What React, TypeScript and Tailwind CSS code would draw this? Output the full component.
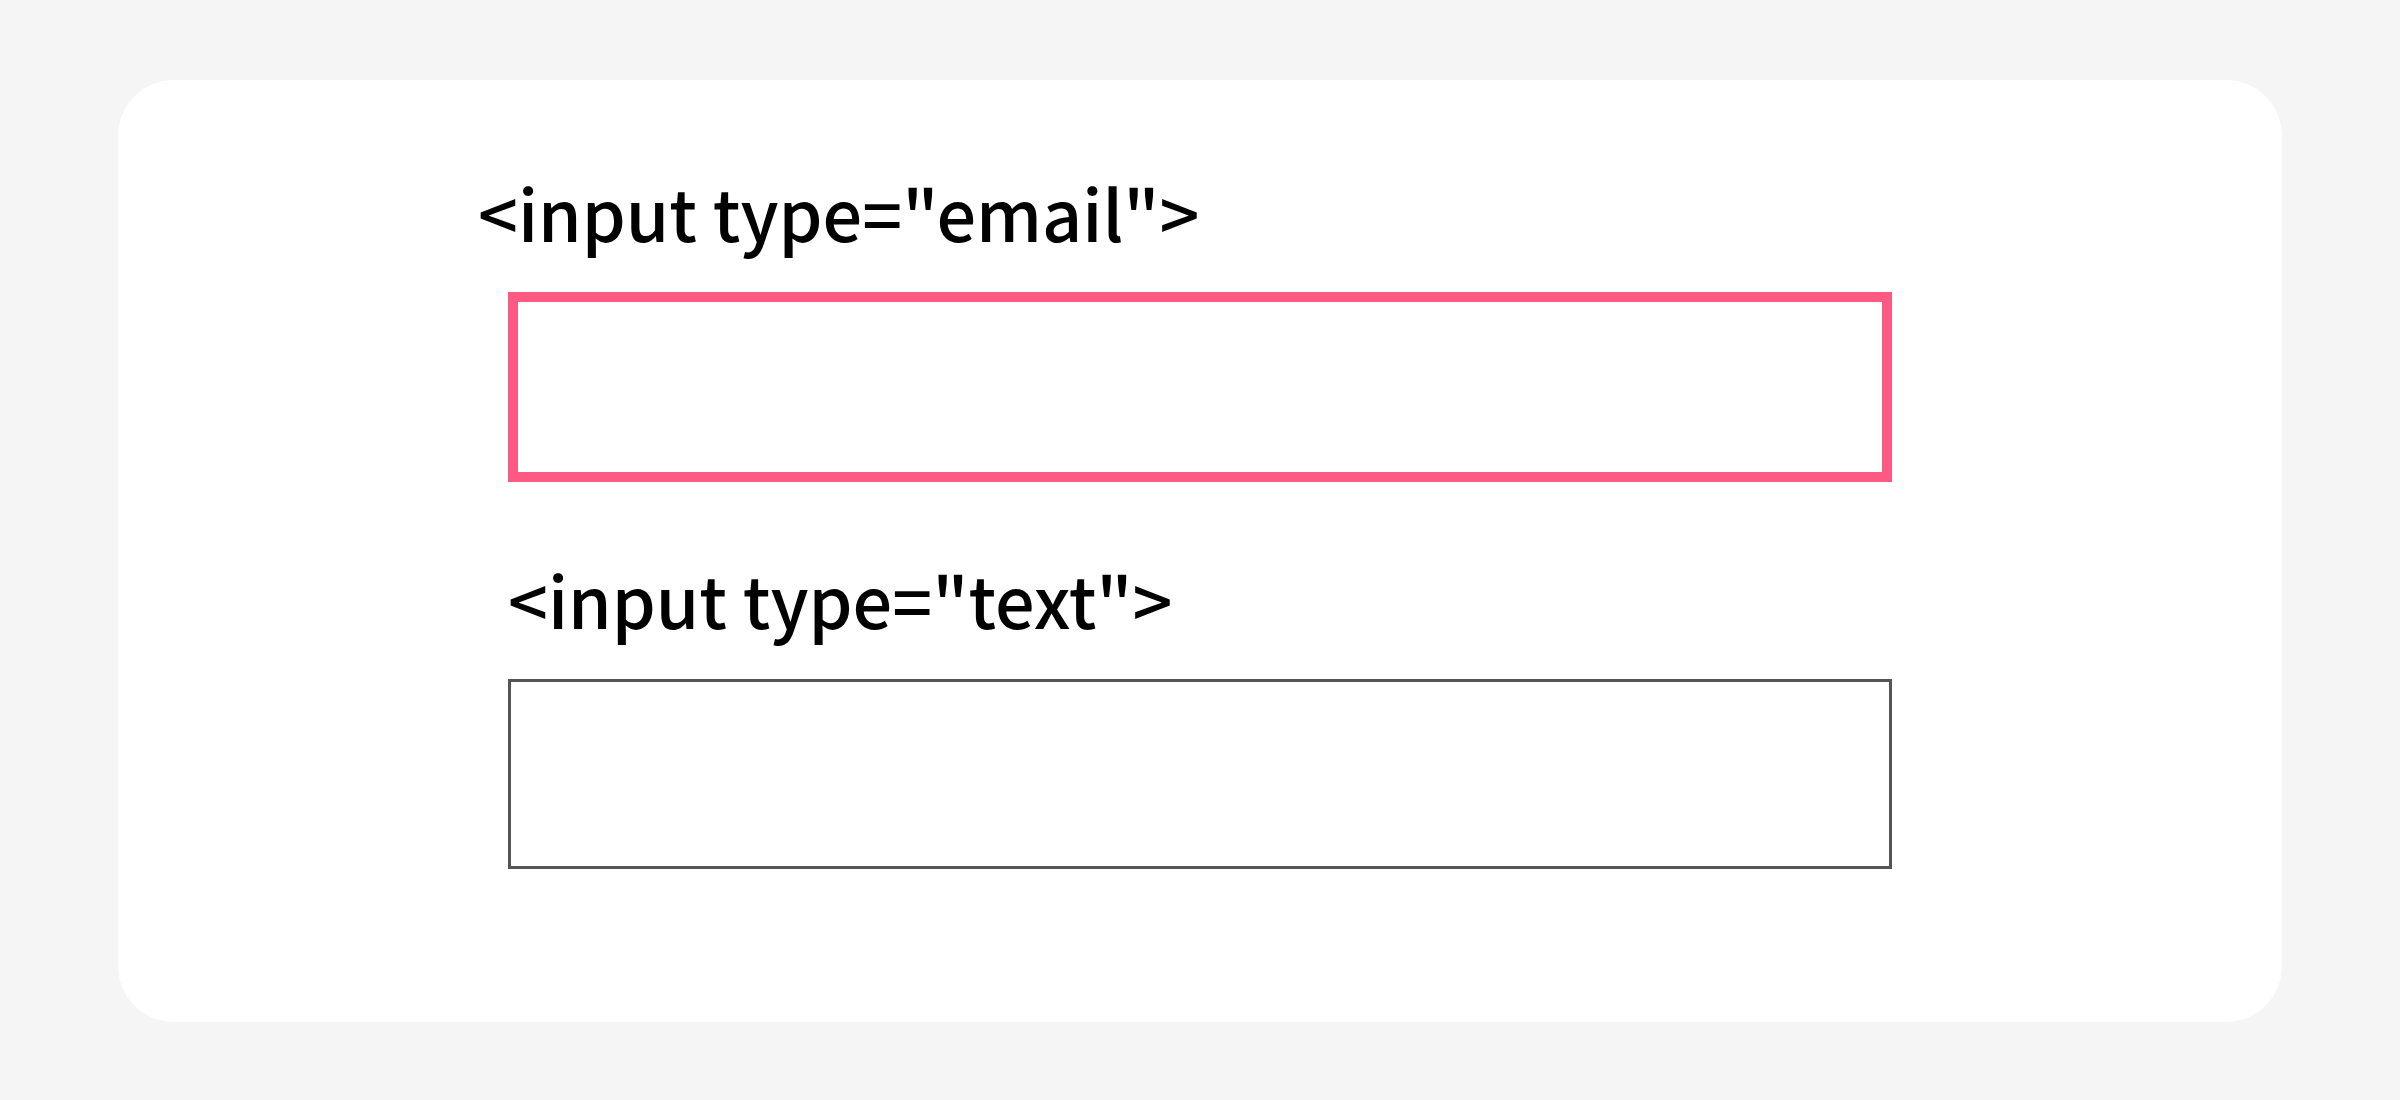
const App = () => {
  return (
    <div className="min-h-screen bg-[#f5f5f5] px-[118px] pt-[80px] pb-[78px]" style={{ fontFamily: '"Noto Sans CJK JP", "Noto Sans", sans-serif' }}>
      <div className="h-[942px] bg-white rounded-[56px] pl-[390px] pt-[92px]">
        {/* email */}
        <p className="text-[70px] leading-[80px] font-medium text-black -ml-[30px]">&lt;input type="email"&gt;</p>
        <div className="mt-[40px] w-[1384px] h-[190px] border-[10px] border-[#fc5a82] bg-white" />

        {/* text */}
        <p className="mt-[77px] text-[70px] leading-[80px] font-medium text-black">&lt;input type="text"&gt;</p>
        <div className="mt-[40px] w-[1384px] h-[190px] border-[3px] border-[#555555] bg-white" />
      </div>
    </div>
  )
}

export default App
